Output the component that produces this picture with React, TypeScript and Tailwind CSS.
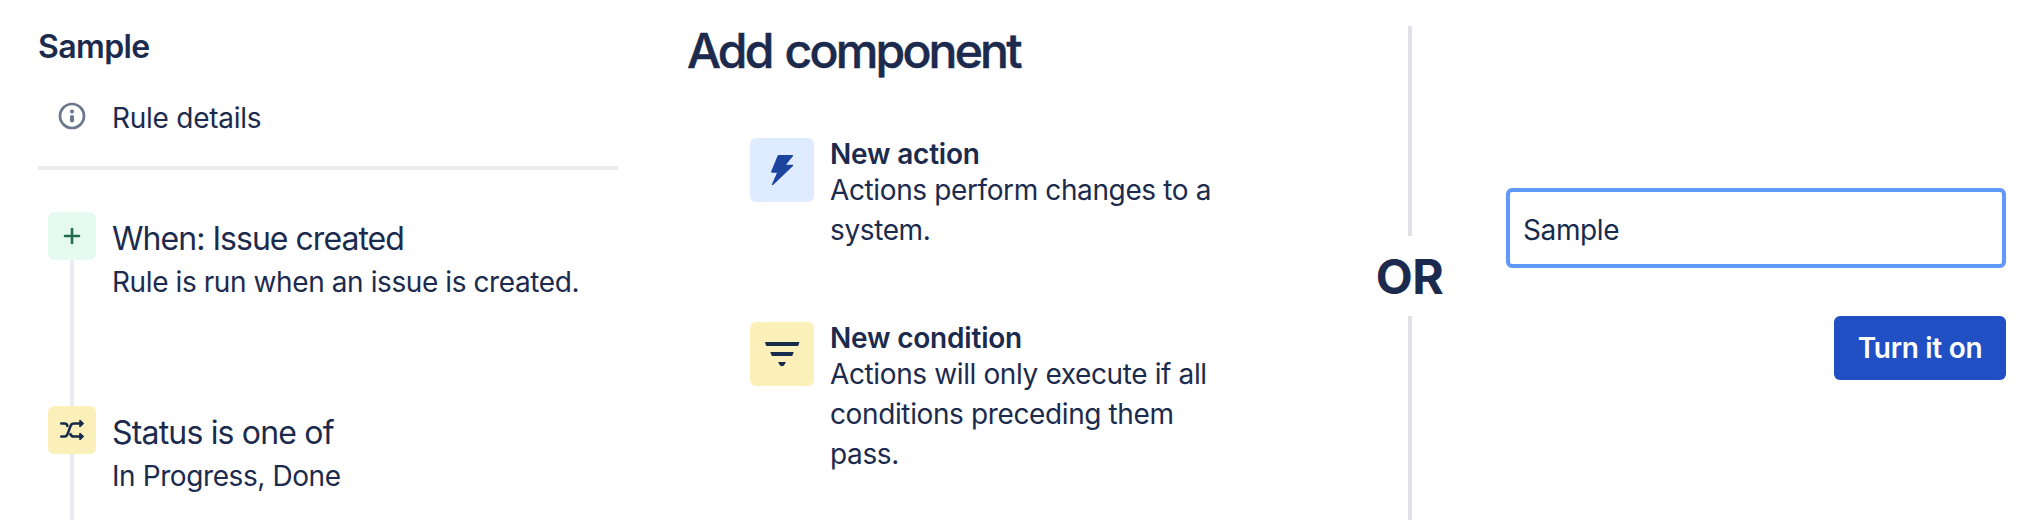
import React from 'react';

interface RuleStepProps {
  icon: React.ReactNode;
  iconClass: string;
  title: string;
  titleClass: string;
  detail: string;
}

function RuleStep({ icon, iconClass, title, titleClass, detail }: RuleStepProps) {
  return (
    <li className="flex h-[194px] gap-4 pl-[10px]">
      <div className="flex w-12 shrink-0 flex-col items-center">
        <div className={`flex size-12 shrink-0 items-center justify-center rounded-md ${iconClass}`}>{icon}</div>
        <div className="w-1 flex-1 bg-[#eaebef]" />
      </div>
      <div className="flex flex-col gap-[3px] pt-[7px] whitespace-nowrap">
        <h3 className={`text-[32px] leading-10 ${titleClass}`}>{title}</h3>
        <p className="text-[28px] leading-10 tracking-[-0.41px]">{detail}</p>
      </div>
    </li>
  );
}

interface ComponentOptionProps {
  icon: React.ReactNode;
  iconClass: string;
  title: string;
  children: React.ReactNode;
}

function ComponentOption({ icon, iconClass, title, children }: ComponentOptionProps) {
  return (
    <li className="flex h-[184px] gap-4">
      <div className={`flex size-16 shrink-0 items-center justify-center rounded-md ${iconClass}`}>{icon}</div>
      <div className="w-[400px] text-[28px]">
        <h3 className="font-semibold leading-8 tracking-[-0.2px]">{title}</h3>
        <p className="leading-10 tracking-[-0.38px]">{children}</p>
      </div>
    </li>
  );
}

function InfoIcon() {
  return (
    <svg width="28" height="28" viewBox="0 0 28 28" fill="none" className="text-[#6b778c]">
      <circle cx="14" cy="14" r="12" stroke="currentColor" strokeWidth="2.7" />
      <circle cx="14" cy="9.4" r="2" fill="currentColor" />
      <rect x="12" y="13" width="4" height="7.5" rx="2" fill="currentColor" />
    </svg>
  );
}

function PlusIcon() {
  return (
    <svg width="48" height="48" viewBox="0 0 48 48" fill="none" className="text-[#216e4e]">
      <path d="M24 17v14M17 24h14" stroke="currentColor" strokeWidth="2.6" strokeLinecap="round" />
    </svg>
  );
}

function ShuffleIcon() {
  return (
    <svg width="48" height="48" viewBox="0 0 48 48" fill="none" className="text-[#172b4d]">
      <g stroke="currentColor" strokeWidth="2.6" strokeLinecap="round" strokeLinejoin="round">
        <path d="M13.3 17.5h3.2c1.6 0 2.5.8 2.9 2.3" />
        <path d="M13.3 30.5h3.2c1.8 0 2.6-1 3.1-2.6l2.9-7.8c.6-1.7 1.5-2.6 3.3-2.6h7" />
        <path d="M22.4 28.2c.6 1.6 1.6 2.3 3.3 2.3h7" />
      </g>
      <path
        d="M32 14.5l3.2 3-3.2 3zM32 27.5l3.2 3-3.2 3z"
        fill="currentColor"
        stroke="currentColor"
        strokeWidth="1.6"
        strokeLinejoin="round"
      />
    </svg>
  );
}

function BoltIcon() {
  return (
    <svg width="64" height="64" viewBox="0 0 64 64" className="text-[#1d45a0]">
      <path d="M28.8 17H43V18L36 26.7H43V28L23 47H21.6L27 34.8H21.3V33.2L27.6 17.8Q28 17 28.8 17Z" fill="currentColor" />
    </svg>
  );
}

function FilterIcon() {
  return (
    <svg width="64" height="64" viewBox="0 0 64 64" className="text-[#172b4d]">
      <path
        d="M15 20h34.4l-.9 3.2a1.1 1.1 0 0 1-1 .8H16.9a1.1 1.1 0 0 1-1-.8zM20.2 30h23.6l-1.3 3.2a1.2 1.2 0 0 1-1.1.8H22.6a1.2 1.2 0 0 1-1.1-.8zM28 40h8l-1.9 3.3a1.3 1.3 0 0 1-1.1.7h-2a1.3 1.3 0 0 1-1.1-.7z"
        fill="currentColor"
      />
    </svg>
  );
}

export default function App() {
  return (
    <div className="flex h-[520px] w-[2040px] overflow-hidden bg-white font-['Inter',sans-serif] text-[#1c2b4d]">
      <section className="ml-[38px] w-[580px] shrink-0 pt-[27px]">
        <h2 className="text-[32px] font-semibold leading-10 tracking-[-0.6px]">Sample</h2>
        <div className="mt-[31px] flex h-10 items-center gap-[26px] pl-5">
          <div className="-mt-1">
            <InfoIcon />
          </div>
          <span className="text-[28px] leading-10 tracking-[-0.25px]">Rule details</span>
        </div>
        <hr className="mt-7 h-1 border-0 bg-[#eaebef]" />
        <ul className="mt-[42px]">
          <RuleStep
            icon={<PlusIcon />}
            iconClass="bg-[#e6fbf0]"
            title="When: Issue created"
            titleClass="tracking-[-0.97px]"
            detail="Rule is run when an issue is created."
          />
          <RuleStep
            icon={<ShuffleIcon />}
            iconClass="bg-[#fcf0ba]"
            title="Status is one of"
            titleClass="tracking-[-0.82px]"
            detail="In Progress, Done"
          />
        </ul>
      </section>

      <section className="ml-[69px] w-[690px] shrink-0 pt-[27px]">
        <h1 className="text-[48px] font-medium leading-[48px] tracking-[-2.8px] [-webkit-text-stroke:0.5px_#1c2b4d] [word-spacing:3px]">
          Add component
        </h1>
        <ul className="mt-[63px] ml-[63px]">
          <ComponentOption icon={<BoltIcon />} iconClass="bg-[#dfebfe]" title="New action">
            Actions perform changes to a system.
          </ComponentOption>
          <ComponentOption icon={<FilterIcon />} iconClass="bg-[#fcf0ba]" title="New condition">
            Actions will only execute if all conditions preceding them pass.
          </ComponentOption>
        </ul>
      </section>

      <div className="-ml-[7px] flex w-20 shrink-0 flex-col items-center pt-[26px]">
        <div className="h-[210px] w-1 bg-[#dfe1e6]" />
        <span className="h-20 pt-px pr-px text-[48px] font-bold leading-[80px] tracking-[-0.5px]">OR</span>
        <div className="w-1 flex-1 bg-[#dfe1e6]" />
      </div>

      <form className="ml-[56px] flex w-[500px] shrink-0 flex-col items-end gap-12 pt-[188px]">
        <input
          type="text"
          defaultValue="Sample"
          className="h-20 w-full rounded-md border-4 border-[#5f9afa] bg-white px-[13px] pt-1 text-[28px] tracking-[-0.4px] text-[#172b4d] outline-none"
        />
        <button
          type="button"
          className="h-16 w-[172px] rounded-md bg-[#2150c4] text-[28px] font-semibold tracking-[-0.3px] whitespace-nowrap text-white"
        >
          Turn it on
        </button>
      </form>
    </div>
  );
}
